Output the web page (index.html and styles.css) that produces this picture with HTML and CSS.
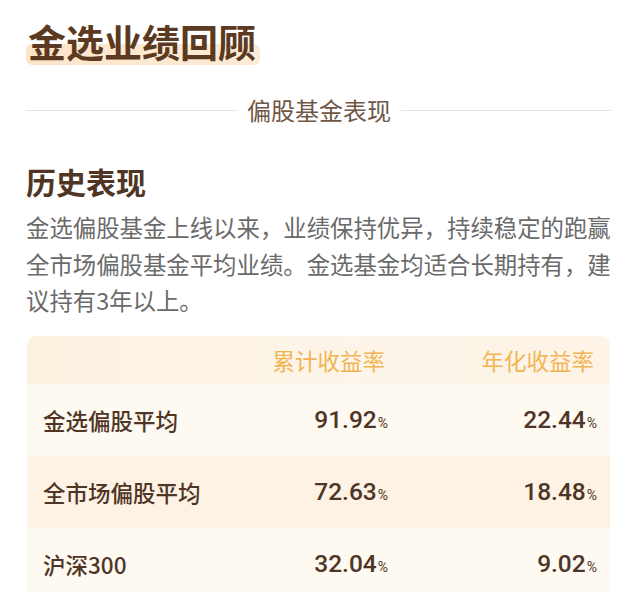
FILE: index.html
```html
<!DOCTYPE html>
<html lang="zh-CN">
<head>
<meta charset="utf-8">
<title>金选业绩回顾</title>
<link rel="stylesheet" href="styles.css">
</head>
<body>
<main class="page">
  <h1 class="title"><span class="title-text">金选业绩回顾</span></h1>

  <div class="divider">
    <span class="divider-line"></span>
    <span class="divider-text">偏股基金表现</span>
    <span class="divider-line"></span>
  </div>

  <h2 class="section-title">历史表现</h2>
  <p class="desc">金选偏股基金上线以来，业绩保持优异，持续稳定的跑赢全市场偏股基金平均业绩。金选基金均适合长期持有，建议持有3年以上。</p>

  <div class="card">
    <div class="row head">
      <div class="cell label"></div>
      <div class="cell num">累计收益率</div>
      <div class="cell num">年化收益率</div>
    </div>
    <div class="row light">
      <div class="cell label">金选偏股平均</div>
      <div class="cell num"><span class="val">91.92</span><span class="pct">%</span></div>
      <div class="cell num"><span class="val">22.44</span><span class="pct">%</span></div>
    </div>
    <div class="row dark">
      <div class="cell label">全市场偏股平均</div>
      <div class="cell num"><span class="val">72.63</span><span class="pct">%</span></div>
      <div class="cell num"><span class="val">18.48</span><span class="pct">%</span></div>
    </div>
    <div class="row light">
      <div class="cell label">沪深300</div>
      <div class="cell num"><span class="val">32.04</span><span class="pct">%</span></div>
      <div class="cell num"><span class="val">9.02</span><span class="pct">%</span></div>
    </div>
  </div>
</main>
</body>
</html>
```

FILE: styles.css
```css
html, body {
  margin: 0;
  padding: 0;
  background: #ffffff;
}

body {
  font-family: "Noto Sans CJK SC", "Noto Sans", sans-serif;
  overflow: hidden;
}

.page {
  padding: 0 28px 0 26px;
}

.title {
  margin: 15px 0 0 0;
  font-size: 38px;
  line-height: 52px;
  font-weight: 700;
  color: #5b3a21;
}

.title-text {
  position: relative;
  display: inline-block;
  padding: 0 4px 0 2px;
  z-index: 0;
}

.title-text::before {
  content: "";
  position: absolute;
  left: 0;
  right: 0;
  bottom: 2px;
  height: 21px;
  border-radius: 6px;
  background: linear-gradient(90deg, #fce4c8 0%, #fdebd8 100%);
  z-index: -1;
}

.divider {
  margin-top: 27px;
  display: flex;
  align-items: center;
  gap: 10px;
  height: 32px;
}

.divider-line {
  flex: 1;
  height: 1px;
  background: #e4e4e4;
}

.divider-text {
  font-size: 24px;
  line-height: 32px;
  color: #6f5747;
}

.section-title {
  margin: 35px 0 0 0;
  font-size: 30px;
  line-height: 40px;
  font-weight: 700;
  color: #4f3524;
}

.desc {
  margin: 8px 0 0 0;
  font-size: 23.4px;
  line-height: 36.5px;
  color: #6a6a6a;
}

.card {
  margin: 17px 2px 0 1px;
  border-radius: 10px 10px 0 0;
  overflow: hidden;
  background: #fef9f1;
}

.row {
  display: grid;
  grid-template-columns: 1fr 180px 209px;
  align-items: center;
  padding: 0 13px 0 16px;
}

.row.head {
  height: 48px;
  background: linear-gradient(90deg, #fdf1e0 0%, #fdf5ea 55%, #fdf3e6 100%);
  color: #f2b552;
  font-size: 22.5px;
}

.row.head .num {
  padding-right: 3px;
}

.row.light {
  height: 72px;
  background: #fef9f1;
}

.row.dark {
  height: 72px;
  background: #fdf2e4;
}

.cell.label {
  font-size: 22.5px;
  font-weight: 500;
  color: #4e3525;
}

.cell.num {
  text-align: right;
  white-space: nowrap;
}

.val {
  font-family: Roboto, "Noto Sans", sans-serif;
  font-weight: 500;
  font-size: 24.5px;
  color: #4e3525;
}

.pct {
  font-family: Roboto, "Noto Sans", sans-serif;
  font-size: 14px;
  color: #4e3525;
  margin-left: 1px;
}
```
